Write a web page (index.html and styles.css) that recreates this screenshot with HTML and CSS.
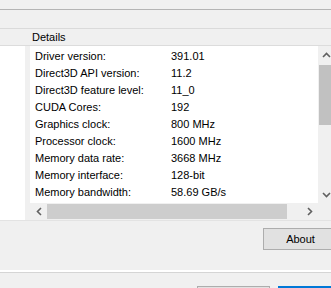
FILE: index.html
```html
<!doctype html>
<html>
<head>
  <meta charset="utf-8" />
  <title>System Information</title>
  <link rel="stylesheet" href="styles.css">
</head>

<body>
  <div class="topbar"></div>
  <div class="band"></div>
  <div class="header"><span class="col-title">Details</span></div>

  <div class="main">
    <div class="leftpane"></div>
    <div class="detail">
      <div class="listwrap">
        <div class="list">
          <div class="row"><span class="label">Driver version:</span><span>391.01</span></div>
          <div class="row"><span class="label">Direct3D API version:</span><span>11.2</span></div>
          <div class="row"><span class="label">Direct3D feature level:</span><span>11_0</span></div>
          <div class="row"><span class="label">CUDA Cores:</span><span>192</span></div>
          <div class="row"><span class="label">Graphics clock:</span><span>800 MHz</span></div>
          <div class="row"><span class="label">Processor clock:</span><span>1600 MHz</span></div>
          <div class="row"><span class="label">Memory data rate:</span><span>3668 MHz</span></div>
          <div class="row"><span class="label">Memory interface:</span><span>128-bit</span></div>
          <div class="row"><span class="label">Memory bandwidth:</span><span>58.69 GB/s</span></div>
        </div>
        <div class="vscroll">
          <div class="arrow"><svg width="9" height="6" viewBox="0 0 9 6"><path d="M1 5 L4.5 1.5 L8 5" fill="none" stroke="#606060" stroke-width="1.6"/></svg></div>
          <div class="vthumb"></div>
          <div class="vtrack"></div>
          <div class="arrow"><svg width="9" height="6" viewBox="0 0 9 6"><path d="M1 1 L4.5 4.5 L8 1" fill="none" stroke="#606060" stroke-width="1.6"/></svg></div>
        </div>
      </div>
      <div class="hscroll">
        <div class="arrow"><svg width="6" height="9" viewBox="0 0 6 9"><path d="M5 1 L1.5 4.5 L5 8" fill="none" stroke="#606060" stroke-width="1.6"/></svg></div>
        <div class="hthumb"></div>
        <div class="arrow"><svg width="6" height="9" viewBox="0 0 6 9"><path d="M1 1 L4.5 4.5 L1 8" fill="none" stroke="#606060" stroke-width="1.6"/></svg></div>
        <div class="corner"></div>
      </div>
    </div>
  </div>

  <div class="toolbar">
    <button class="btn about">About</button>
  </div>

  <div class="footer">
    <button class="btn plain"></button>
    <button class="btn default"></button>
  </div>
</body>
</html>
```

FILE: styles.css
```css
body {
  margin: 0;
  width: 331px;
  height: 288px;
  overflow: hidden;
  background: #f0f0f0;
  font-family: "Liberation Sans", Arial, sans-serif;
  font-size: 11px;
  color: #000;
}
.topbar {
  height: 9px;
  border-bottom: 1px solid #b4b4b4;
}
.band {
  height: 18px;
  border-bottom: 1px solid #dadada;
}
.header {
  height: 16px;
  line-height: 16px;
  padding-left: 32px;
  border-bottom: 1px solid #dcdcdc;
}
.main {
  display: flex;
  height: 174px;
}
.leftpane {
  width: 25px;
  flex: none;
  background: #fff;
}
.detail {
  margin-left: 5px;
  width: 305px;
  flex: none;
  display: flex;
  flex-direction: column;
}
.listwrap {
  display: flex;
  height: 157px;
}
.list {
  width: 288px;
  flex: none;
  background: #fff;
  padding: 2px 0 0 5px;
  box-sizing: border-box;
}
.row {
  display: flex;
  height: 17px;
  line-height: 17px;
  white-space: nowrap;
}
.label {
  width: 136px;
  flex: none;
}
.vscroll {
  width: 17px;
  flex: none;
  display: flex;
  flex-direction: column;
}
.vscroll .arrow {
  height: 17px;
  display: flex;
  align-items: center;
  justify-content: center;
}
.vthumb {
  height: 60px;
  margin: 2px 0 0 1px;
  background: #c1c1c1;
}
.vtrack {
  flex: 1;
}
.hscroll {
  display: flex;
  height: 17px;
}
.hscroll .arrow {
  width: 17px;
  flex: none;
  display: flex;
  align-items: center;
  justify-content: center;
}
.hthumb {
  width: 240px;
  flex: none;
  margin: 1px 0;
  background: #cdcdcd;
}
.hscroll .arrow:nth-child(3) {
  margin-left: 14px;
}
.corner {
  flex: 1;
}
.toolbar {
  height: 52px;
  border-top: 1px solid #e3e3e3;
  border-bottom: 2px solid #fff;
  box-sizing: border-box;
  padding: 7px 0 0 263px;
  white-space: nowrap;
}
.btn {
  font-family: inherit;
  font-size: 11px;
  background: #e1e1e1;
  border: 1px solid #adadad;
  padding: 0;
  margin: 0;
  height: 22px;
}
.about {
  width: 75px;
}
.footer {
  height: 15px;
  overflow: hidden;
  border-top: 1px solid #d5d5d5;
  padding: 13px 0 0 197px;
  display: flex;
  gap: 8px;
}
.plain {
  width: 73px;
  flex: none;
}
.default {
  width: 75px;
  flex: none;
  border: 2px solid #0078d7;
}
```
